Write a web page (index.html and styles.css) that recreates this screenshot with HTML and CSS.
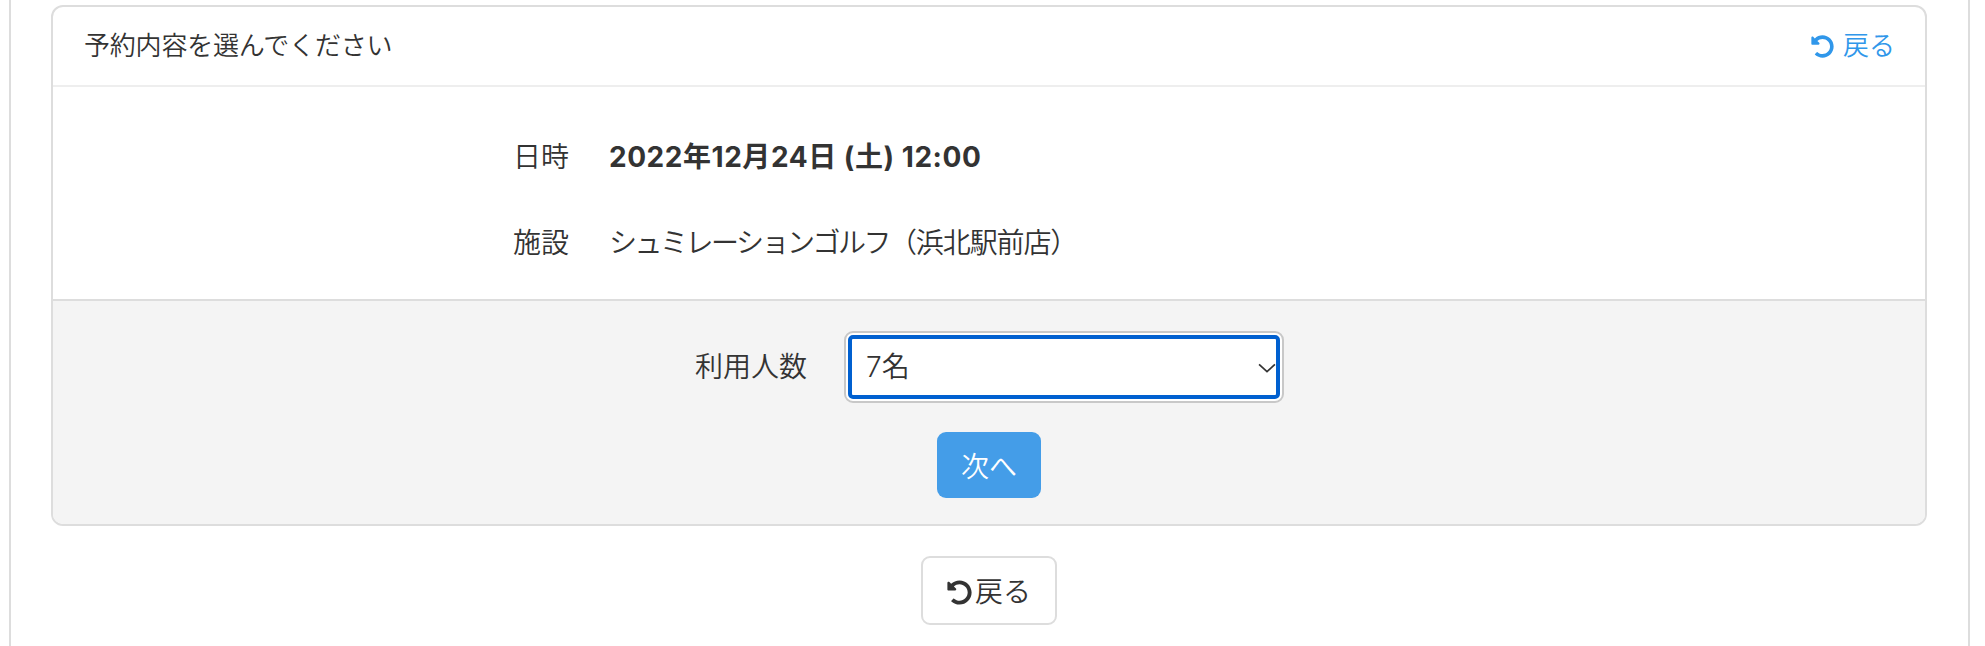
FILE: index.html
```html
<!DOCTYPE html>
<html lang="ja">
<head>
<meta charset="utf-8">
<title>予約内容を選んでください</title>
<link rel="stylesheet" href="styles.css">
</head>
<body>
<main class="page">
  <section class="card">
    <header class="card-head">
      <h2 class="card-title">予約内容を選んでください</h2>
      <a class="link-back" href="#">
        <svg class="undo" viewBox="0 0 512 512" aria-hidden="true"><path d="M255.545 8c-66.269.119-126.438 26.233-170.86 68.685L48.971 40.971C33.851 25.851 8 36.559 8 57.941V192c0 13.255 10.745 24 24 24h134.059c21.382 0 32.09-25.851 16.971-40.971l-41.75-41.75c30.864-28.899 70.801-44.907 113.23-45.273 92.398-.798 170.283 73.977 169.484 169.442C423.236 348.009 349.816 424 256 424c-41.127 0-79.997-14.678-110.63-41.556-4.743-4.161-11.906-3.908-16.368.553L89.34 422.659c-4.872 4.872-4.631 12.815.482 17.433C133.798 479.813 192.074 504 256 504c136.966 0 247.999-111.033 248-247.998C504.001 119.193 392.354 7.755 255.545 8z"/></svg>
        <span>戻る</span>
      </a>
    </header>
    <dl class="summary">
      <div class="summary-row">
        <dt>日時</dt>
        <dd class="strong">2022年12月24日 (土) 12:00</dd>
      </div>
      <div class="summary-row">
        <dt>施設</dt>
        <dd class="place"><span class="kana">シュミレーションゴルフ</span>（浜北駅前店）</dd>
      </div>
    </dl>
    <form class="card-foot">
      <div class="field">
        <label class="field-label" for="people">利用人数</label>
        <div class="select-wrap">
          <select id="people" class="select"><option>7名</option></select>
          <svg class="chevron" viewBox="0 0 17 9" aria-hidden="true"><path d="M1 1l7.5 7L16 1"/></svg>
        </div>
      </div>
      <button class="btn-next" type="button"><span class="btn-label">次へ</span></button>
    </form>
  </section>
  <div class="actions">
    <a class="btn-back" href="#">
      <svg class="undo" viewBox="0 0 512 512" aria-hidden="true"><path d="M255.545 8c-66.269.119-126.438 26.233-170.86 68.685L48.971 40.971C33.851 25.851 8 36.559 8 57.941V192c0 13.255 10.745 24 24 24h134.059c21.382 0 32.09-25.851 16.971-40.971l-41.75-41.75c30.864-28.899 70.801-44.907 113.23-45.273 92.398-.798 170.283 73.977 169.484 169.442C423.236 348.009 349.816 424 256 424c-41.127 0-79.997-14.678-110.63-41.556-4.743-4.161-11.906-3.908-16.368.553L89.34 422.659c-4.872 4.872-4.631 12.815.482 17.433C133.798 479.813 192.074 504 256 504c136.966 0 247.999-111.033 248-247.998C504.001 119.193 392.354 7.755 255.545 8z"/></svg>
      <span>戻る</span>
    </a>
  </div>
</main>
</body>
</html>
```

FILE: styles.css
```css
* { box-sizing: border-box; }
html, body { margin: 0; height: 100%; background: #fff; overflow: hidden; }
body {
  font-family: Inter, "Noto Sans CJK JP", sans-serif;
  color: #333;
  font-size: 28px;
  font-weight: 350;
  line-height: 40px;
}
.page {
  margin-left: 9px;
  width: 1961px;
  height: 646px;
  border-left: 2px solid #ddd;
  border-right: 2px solid #ddd;
  padding: 5px 40px 0;
}
.card {
  width: 1876px;
  height: 521px;
  border: 2px solid #ddd;
  border-radius: 12px;
  overflow: hidden;
  display: flex;
  flex-direction: column;
}
.card-head {
  height: 80px;
  flex: none;
  display: flex;
  justify-content: space-between;
  align-items: center;
  padding: 0 30px 0 31px;
  border-bottom: 2px solid #eee;
}
.card-title { margin: 0; font-size: 26px; font-weight: 350; letter-spacing: -0.2px; }
.link-back { display: flex; align-items: center; gap: 9px; color: #3097ea; text-decoration: none; font-size: 26px; }
.link-back .undo { width: 23px; height: 23px; }
.undo { width: 25px; height: 25px; fill: currentColor; flex: none; }
.summary { margin: 0; flex: none; height: 212px; padding-top: 27px; }
.summary-row { display: flex; height: 86px; align-items: center; }
dt { width: 516px; text-align: right; }
dd { margin: 0 0 0 40px; }
.strong { font-weight: 700; letter-spacing: 0.55px; }
.place { letter-spacing: -1.1px; }
.kana { letter-spacing: -2.5px; }
.card-foot {
  flex: 1;
  background: #f4f4f4;
  border-top: 2px solid #ddd;
  display: flex;
  flex-direction: column;
  align-items: center;
  padding-top: 30px;
}
.field { display: flex; align-items: center; width: 100%; height: 72px; }
.field-label { width: 754px; text-align: right; padding-bottom: 1px; }
.select-wrap { position: relative; margin-left: 37px; width: 440px; height: 72px; }
.select {
  appearance: none;
  width: 100%;
  height: 100%;
  font: inherit;
  color: inherit;
  background: #fff;
  border: 2px solid #c8c8c8;
  border-radius: 9px;
  padding: 0 20px;
  outline: 4px solid #0060d0;
  outline-offset: -8px;
}
.chevron {
  position: absolute;
  right: 8px;
  top: 32px;
  width: 18px;
  height: 10px;
  fill: none;
  stroke: #333;
  stroke-width: 1.6;
}
.btn-next {
  margin-top: 29px;
  width: 104px;
  height: 66px;
  border: 0;
  border-radius: 9px;
  background: #449de8;
  color: #fff;
  font: inherit;
  padding: 4px 0 0;
}
.actions { display: flex; justify-content: center; padding-top: 30px; margin-left: -1px; }
.btn-back {
  width: 136px;
  height: 69px;
  border: 2px solid #ddd;
  border-radius: 9px;
  padding-top: 3px;
  display: flex;
  align-items: center;
  justify-content: center;
  gap: 3px;
  color: #333;
  text-decoration: none;
}
```
